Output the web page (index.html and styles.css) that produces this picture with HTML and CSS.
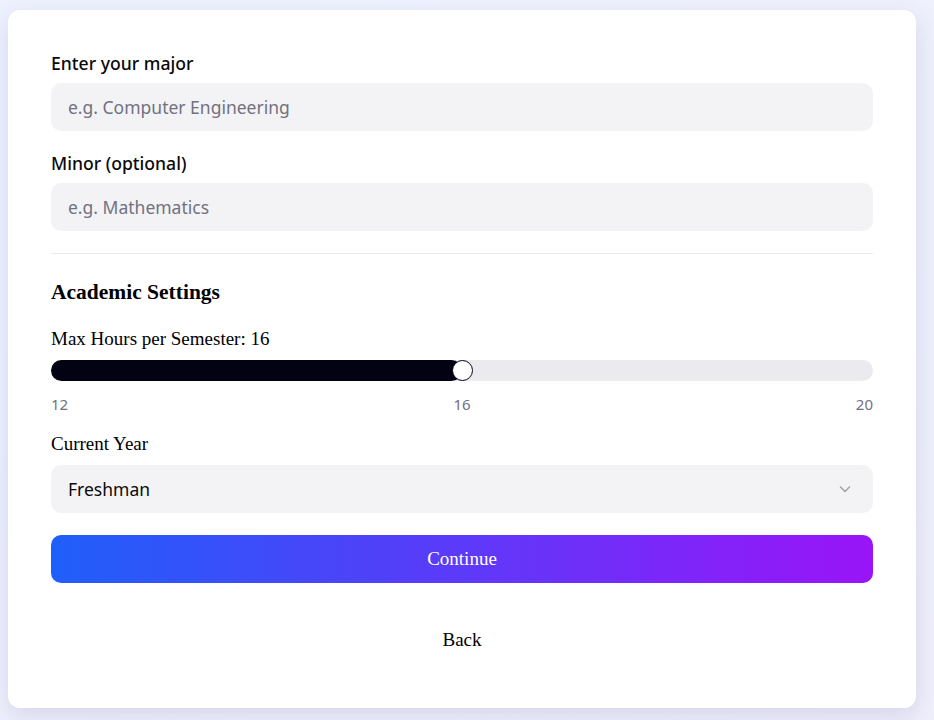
FILE: index.html
```html
<!DOCTYPE html>
<html lang="en">
<head>
    <meta charset="UTF-8">
    <meta name="viewport" content="width=device-width, initial-scale=1.0">
    <title>Academic Profile</title>
    <link rel="stylesheet" href="styles.css">
</head>
<body>
    <div class="setup-card">
        <div class="setup-field">
            <label class="setup-label" for="major">Enter your major</label>
            <input id="major" class="setup-input" type="text" placeholder="e.g. Computer Engineering">
        </div>
        <div class="setup-field setup-field-next">
            <label class="setup-label" for="minor">Minor (optional)</label>
            <input id="minor" class="setup-input" type="text" placeholder="e.g. Mathematics">
        </div>

        <div class="setup-divider"></div>

        <h3 class="setup-heading">Academic Settings</h3>
        <div class="setup-text">Max Hours per Semester: 16</div>

        <div class="setup-slider">
            <div class="setup-slider-fill" style="width: 50%"></div>
            <div class="setup-slider-thumb" style="left: 50%"></div>
        </div>
        <div class="setup-scale">
            <span>12</span>
            <span>16</span>
            <span>20</span>
        </div>

        <div class="setup-text setup-year-label">Current Year</div>
        <div class="setup-select">
            <span>Freshman</span>
            <svg width="16" height="16" viewBox="0 0 16 16" fill="none" stroke="#a1a1aa" stroke-width="1.5" stroke-linecap="round" stroke-linejoin="round">
                <polyline points="3.5,6 8,10.5 12.5,6"></polyline>
            </svg>
        </div>

        <button class="setup-continue">Continue</button>
        <button class="setup-back">Back</button>
    </div>
</body>
</html>
```

FILE: styles.css
```css
html, body {
    margin: 0;
    height: 100%;
}

body {
    padding: 10px 18px 0 8px;
    box-sizing: border-box;
    background: linear-gradient(135deg, #eef2fe 0%, #efeffc 100%);
    overflow: hidden;
}

.setup-card {
    height: 698px;
    box-sizing: border-box;
    padding: 41px 43px 0;
    background-color: white;
    border-radius: 12px;
    box-shadow: 0 8px 24px rgba(60, 60, 110, 0.14);
    display: flex;
    flex-direction: column;
}

.setup-field {
    display: flex;
    flex-direction: column;
}

.setup-field-next {
    margin-top: 20px;
}

.setup-label {
    font-family: "Noto Sans", "Open Sans", sans-serif;
    font-size: 17.6px;
    font-weight: 500;
    line-height: 24px;
    color: #0a0a0a;
    margin-bottom: 8px;
}

.setup-input {
    height: 48px;
    box-sizing: border-box;
    border: none;
    border-radius: 10px;
    background-color: #f3f3f5;
    padding: 0 17px;
    font-family: "Noto Sans", "Open Sans", sans-serif;
    font-size: 17.5px;
    color: #0a0a0a;
    outline: none;
}

.setup-input::placeholder {
    color: #717182;
}

.setup-divider {
    margin-top: 22px;
    height: 1px;
    background-color: #e9e9ee;
}

.setup-heading {
    margin: 26px 0 0;
    font-family: "Liberation Serif", serif;
    font-size: 21.5px;
    font-weight: bold;
    line-height: 24px;
    color: #000;
}

.setup-text {
    margin-top: 24px;
    font-family: "Liberation Serif", serif;
    font-size: 19px;
    line-height: 22px;
    color: #000;
}

.setup-slider {
    position: relative;
    margin-top: 10px;
    height: 21px;
    border-radius: 11px;
    background-color: #ebebef;
}

.setup-slider-fill {
    height: 100%;
    border-radius: 11px;
    background-color: #030213;
}

.setup-slider-thumb {
    position: absolute;
    top: 0;
    width: 21px;
    height: 21px;
    box-sizing: border-box;
    margin-left: -10px;
    border-radius: 50%;
    background-color: white;
    border: 1.5px solid #030213;
}

.setup-scale {
    margin-top: 13px;
    display: flex;
    justify-content: space-between;
    font-family: "Noto Sans", "Open Sans", sans-serif;
    font-size: 15px;
    line-height: 20px;
    color: #717182;
}

.setup-year-label {
    margin-top: 19px;
}

.setup-select {
    margin-top: 10px;
    height: 48px;
    box-sizing: border-box;
    padding: 0 20px 0 17px;
    border-radius: 10px;
    background-color: #f3f3f5;
    display: flex;
    align-items: center;
    justify-content: space-between;
    font-family: "Noto Sans", "Open Sans", sans-serif;
    font-size: 17.5px;
    color: #0a0a0a;
}

.setup-continue {
    margin-top: 22px;
    height: 48px;
    border: none;
    border-radius: 10px;
    background: linear-gradient(to right, #1f5ffa, #9a14f8);
    color: white;
    font-family: "Liberation Serif", serif;
    font-size: 19px;
    cursor: pointer;
}

.setup-back {
    margin-top: 46px;
    align-self: center;
    border: none;
    background: none;
    padding: 0;
    font-family: "Liberation Serif", serif;
    font-size: 19px;
    line-height: 22px;
    color: #000;
    cursor: pointer;
}
```
